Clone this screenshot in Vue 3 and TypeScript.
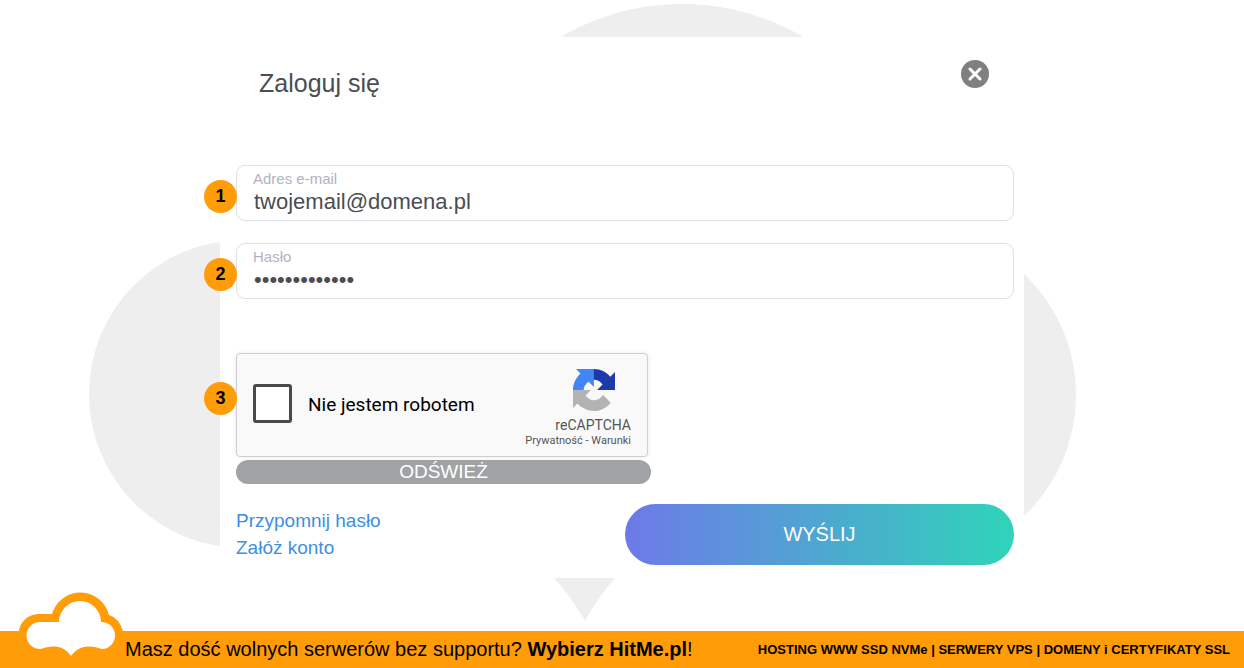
<script setup lang="ts">
import { ref } from 'vue'

const email = ref('twojemail@domena.pl')
const password = ref('haslo12345678')
const human = ref(false)

function refresh(): void {
  human.value = false
}
</script>

<template>
  <div class="page">
    <svg class="backdrop" viewBox="0 0 1244 631" preserveAspectRatio="xMidYMin meet" aria-hidden="true">
      <circle cx="243" cy="394" r="154" />
      <circle cx="682" cy="242" r="238" />
      <circle cx="909" cy="395" r="167" />
      <path d="M554 578H615Q598 597 585 621Q571 596 554 578Z" />
    </svg>

    <main class="main">
      <form class="card" @submit.prevent>
        <header class="head">
          <h1 class="title">Zaloguj się</h1>
          <button class="close" type="button" aria-label="Zamknij">
            <svg viewBox="0 0 28 28" aria-hidden="true">
              <circle cx="14" cy="14" r="14" fill="#808080" />
              <path d="M9 9L19 19M19 9L9 19" stroke="#fff" stroke-width="3" stroke-linecap="round" />
            </svg>
          </button>
        </header>

        <div class="fields">
          <div class="field">
            <span class="badge">1</span>
            <label class="caption" for="email">Adres e-mail</label>
            <input id="email" v-model="email" class="value" type="text" autocomplete="off" />
          </div>
          <div class="field">
            <span class="badge">2</span>
            <label class="caption" for="password">Hasło</label>
            <input id="password" v-model="password" class="value" type="password" autocomplete="off" />
          </div>
        </div>

        <div class="verify">
          <div class="captcha">
            <span class="badge badge-captcha">3</span>
            <input id="human" v-model="human" class="tick" type="checkbox" />
            <label class="human" for="human">Nie jestem robotem</label>
            <div class="brand">
              <svg class="logo" viewBox="0 0 64 64" aria-hidden="true">
                <path fill="#1c3aa9" d="M64 31.955l-.033-1.37V4.687l-7.16 7.16C50.948 4.674 42.033.093 32.05.093c-10.4 0-19.622 4.96-25.458 12.64l11.736 11.86a15.55 15.55 0 0 1 4.754-5.334c2.05-1.6 4.952-2.906 8.968-2.906.485 0 .86.057 1.135.163 4.976.393 9.288 3.14 11.828 7.124l-8.307 8.307L64 31.953" />
                <path fill="#4285f4" d="M31.862.094l-1.37.033H4.594l7.16 7.16C4.58 13.147 0 22.06 0 32.046c0 10.4 4.96 19.622 12.64 25.458L24.5 45.768a15.55 15.55 0 0 1-5.334-4.754c-1.6-2.05-2.906-4.952-2.906-8.968 0-.485.057-.86.163-1.135.393-4.976 3.14-9.288 7.124-11.828l8.307 8.307L31.86.095" />
                <path fill="#b3b3b3" d="M.001 32.045l.033 1.37v25.898l7.16-7.16c5.86 7.173 14.774 11.754 24.76 11.754 10.4 0 19.622-4.96 25.458-12.64l-11.736-11.86a15.55 15.55 0 0 1-4.754 5.334c-2.05 1.6-4.952 2.906-8.968 2.906-.485 0-.86-.057-1.135-.163-4.976-.393-9.288-3.14-11.828-7.124l8.307-8.307c-10.522.04-22.4.066-27.295-.005" />
              </svg>
              <span class="name">reCAPTCHA</span>
              <span class="legal"><a href="#privacy">Prywatność</a> - <a href="#terms">Warunki</a></span>
            </div>
          </div>
          <button class="refresh" type="button" @click="refresh">ODŚWIEŻ</button>
        </div>

        <div class="actions">
          <nav class="links">
            <a href="#reset">Przypomnij hasło</a>
            <a href="#register">Załóż konto</a>
          </nav>
          <button class="submit" type="submit">WYŚLIJ</button>
        </div>
      </form>
    </main>

    <footer class="footer">
      <svg class="cloud" viewBox="18 592 106 76" aria-hidden="true">
        <path fill="#ff9c08" d="M19 668V631A20 19 0 0 1 38 614H52A29.500 29.500 0 0 1 109 615Q119 618 123 631V668Z" />
        <path fill="#fff" d="M40 622H59A21 21 0 0 1 101 622A13.500 13.500 0 0 1 102 649C94 646 80 643 71 656C62 643 50 646 40 649A13.500 13.500 0 0 1 40 622Z" />
      </svg>
      <p class="slogan">Masz dość wolnych serwerów bez supportu? <strong>Wybierz HitMe.pl</strong>!</p>
      <p class="offer">HOSTING WWW SSD NVMe | SERWERY VPS | DOMENY i CERTYFIKATY SSL</p>
    </footer>
  </div>
</template>

<style>
body {
  margin: 0;
  background: #fff;
}
</style>

<style scoped>
.page,
.page * {
  box-sizing: border-box;
}

.page {
  position: relative;
  display: flex;
  flex-direction: column;
  min-height: 100vh;
  overflow: hidden;
  font-family: "Liberation Sans", Arial, sans-serif;
  color: #4a4d52;
}

.backdrop {
  position: absolute;
  top: 0;
  left: 0;
  width: 100%;
  fill: #eee;
}

.main {
  position: relative;
  flex: 1;
  padding: 37px 16px 53px;
}

.card {
  max-width: 804px;
  margin: 0 auto;
  padding: 23px 10px 13px 16px;
  background: #fff;
}

.head {
  display: flex;
  justify-content: space-between;
  align-items: flex-start;
  padding: 0 25px 67px 23px;
}

.title {
  margin: 0;
  padding-top: 8px;
  font-size: 25px;
  font-weight: 400;
  line-height: 30px;
}

.close {
  width: 28px;
  height: 28px;
  padding: 0;
  border: 0;
  background: none;
}

.close svg {
  display: block;
}

.fields {
  display: flex;
  flex-direction: column;
  gap: 22px;
}

.field {
  position: relative;
  display: flex;
  flex-direction: column;
  padding: 4px 16px;
  border: 1px solid #dedfe3;
  border-radius: 9px;
}

.caption {
  font-size: 15px;
  line-height: 18px;
  color: #b3b2c1;
}

.value {
  width: 100%;
  height: 28px;
  padding: 0 1px;
  border: 0;
  outline: 0;
  background: transparent;
  font: inherit;
  font-size: 22px;
  color: #4a4d52;
}

.badge {
  position: absolute;
  top: 14px;
  left: -33px;
  width: 33px;
  height: 33px;
  border-radius: 50%;
  background: #ff9c08;
  font-family: "Liberation Sans", Arial, sans-serif;
  font-size: 18px;
  font-weight: 700;
  line-height: 33px;
  text-align: center;
  color: #000;
}

.badge-captcha {
  top: 28px;
}

.verify {
  display: flex;
  flex-direction: column;
  gap: 3px;
  max-width: 415px;
  margin-top: 54px;
}

.captcha {
  position: relative;
  display: flex;
  align-items: center;
  gap: 16px;
  min-height: 104px;
  margin-right: 3px;
  padding: 0 16px;
  border: 1px solid #cfcfcf;
  border-radius: 4px;
  background: #f9f9f9;
  box-shadow: 0 0 4px rgba(0, 0, 0, 0.1);
  font-family: Roboto, sans-serif;
}

.tick {
  width: 39px;
  height: 39px;
  margin: 0 0 3px;
  border: 3px solid #4a4a4a;
  border-radius: 3px;
  background: #fff;
  appearance: none;
}

.tick:checked {
  background: #4285f4;
}

.human {
  flex: 1;
  font-size: 19px;
  line-height: 24px;
  color: #000;
}

.brand {
  display: flex;
  flex-direction: column;
  align-items: flex-end;
  padding-top: 6px;
  color: #555;
}

.logo {
  width: 42px;
  height: 42px;
  margin: 0 16px 6px 0;
}

.name {
  font-size: 14px;
  line-height: 16px;
}

.legal {
  font-size: 11px;
  line-height: 15px;
}

.legal a {
  color: inherit;
  text-decoration: none;
}

.refresh {
  height: 24px;
  padding: 0;
  border: 0;
  border-radius: 12px;
  background: #9fa3a6;
  font: inherit;
  font-size: 19px;
  line-height: 24px;
  color: #fff;
}

.actions {
  display: flex;
  justify-content: space-between;
  align-items: flex-start;
  margin-top: 20px;
}

.links {
  display: flex;
  flex-direction: column;
  padding-top: 3px;
  font-size: 19px;
  line-height: 27px;
}

.links a {
  color: #3d8fe0;
  text-decoration: none;
}

.submit {
  width: 50%;
  height: 61px;
  border: 0;
  border-radius: 31px;
  background: linear-gradient(90deg, #6e79e8, #2fd4b9);
  font: inherit;
  font-size: 20px;
  color: #fff;
}

.footer {
  position: relative;
  display: flex;
  align-items: center;
  height: 37px;
  padding: 0 14px 0 18px;
  background: #ff9c08;
  color: #000;
}

.cloud {
  flex: none;
  align-self: flex-end;
  width: 106px;
  height: 76px;
}

.slogan,
.offer {
  margin: 0;
  padding-bottom: 2px;
  white-space: nowrap;
}

.slogan {
  flex: 1;
  padding-left: 1px;
  font-size: 20px;
  line-height: 24px;
}

.offer {
  padding-bottom: 0;
  font-size: 13px;
  font-weight: 700;
  line-height: 16px;
}
</style>
